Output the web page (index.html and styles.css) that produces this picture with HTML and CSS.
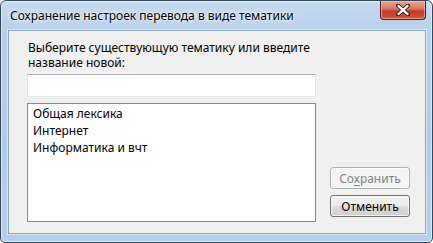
FILE: index.html
```html
<!DOCTYPE html>
<html lang="ru">
<head>
    <meta charset="UTF-8">
    <title>Сохранение настроек перевода в виде тематики</title>
    <link rel="stylesheet" href="styles.css">
</head>
<body>
<div class="window">
    <div class="titlebar">
        <span class="title">Сохранение настроек перевода в виде тематики</span>
        <button class="close" title="Закрыть">
            <svg viewBox="0 0 14 12" width="14" height="12">
                <path d="M2 1.5 L12 10.5 M12 1.5 L2 10.5" stroke="#3b1d1a" stroke-width="4" stroke-linecap="round"/>
                <path d="M2.4 1.9 L11.6 10.1 M11.6 1.9 L2.4 10.1" stroke="#fff" stroke-width="2.2" stroke-linecap="round"/>
            </svg>
        </button>
    </div>

    <div class="client">
        <div class="main">
            <label class="prompt" for="topic-name">Выберите существующую тематику или введите название новой:</label>
            <input class="name-input" id="topic-name" type="text">
            <ul class="topics">
                <li>Общая лексика</li>
                <li>Интернет</li>
                <li>Информатика и вчт</li>
            </ul>
        </div>

        <div class="actions">
            <button class="btn" disabled>Со<u>х</u>ранить</button>
            <button class="btn">Отменить</button>
        </div>
    </div>
</div>
</body>
</html>
```

FILE: styles.css
```css
* {
    box-sizing: border-box;
    margin: 0;
    padding: 0;
}

body {
    font-family: 'Noto Sans', 'Open Sans', sans-serif;
    font-size: 12px;
    line-height: 15px;
    color: #000;
    background: #fff;
}

.window {
    width: 433px;
    height: 243px;
    display: flex;
    flex-direction: column;
    border: 1px solid #34485c;
    border-radius: 6px 6px 5px 5px;
    padding: 0 6px 8px 7px;
    background: linear-gradient(180deg, #c6daef 0%, #b9d0ea 12%, #aecbe9 60%, #b4cfec 100%);
    box-shadow: inset 0 0 0 1px rgba(255, 255, 255, 0.55);
}

/* title bar */
.titlebar {
    height: 29px;
    flex-shrink: 0;
    display: flex;
    align-items: flex-start;
}

.title {
    padding: 7px 0 0 2px;
    text-shadow: 0 0 6px #fff, 0 0 3px #fff;
}

.close {
    margin-left: auto;
    width: 46px;
    height: 19px;
    border: 1px solid #4e1f1a;
    border-top: none;
    border-radius: 0 0 4px 4px;
    background: linear-gradient(180deg, #e8a495 0%, #d67563 45%, #c03a27 55%, #d2583e 100%);
    box-shadow: inset 0 0 0 1px rgba(255, 220, 210, 0.5);
    display: flex;
    align-items: center;
    justify-content: center;
}

/* client area */
.client {
    flex: 1;
    display: flex;
    background: #f0f0f0;
    border: 1px solid #8da4bd;
    box-shadow: 0 0 0 1px rgba(255, 255, 255, 0.5);
    padding: 9px 15px 10px 18px;
}

.main {
    width: 289px;
    display: flex;
    flex-direction: column;
}

.main > * {
    flex-shrink: 0;
}

.prompt {
    display: block;
    padding-left: 1px;
}

.name-input {
    margin-top: 4px;
    height: 23px;
    border: 1px solid #e2e3ea;
    border-top-color: #abadb3;
    border-bottom-color: #e3e9ef;
    background: #fff;
    outline: none;
}

.topics {
    list-style: none;
    margin-top: 6px;
    height: 119px;
    border: 1px solid #828790;
    background: #fff;
    padding: 2px 0 0 5px;
}

.topics li {
    height: 17px;
}

/* buttons */
.actions {
    margin-left: auto;
    margin-bottom: 6px;
    align-self: flex-end;
    display: flex;
    flex-direction: column;
    gap: 6px;
}

.btn {
    width: 80px;
    height: 22px;
    font: inherit;
    color: #000;
    border: 1px solid #707070;
    border-radius: 3px;
    background: linear-gradient(180deg, #f2f2f2 0%, #ebebeb 50%, #dddddd 51%, #cfcfcf 100%);
    box-shadow: inset 0 0 0 1px rgba(255, 255, 255, 0.7);
}

.btn u {
    text-underline-offset: 2px;
}

.btn:disabled {
    color: #838383;
    border-color: #adb2b5;
    background: #f4f4f4;
}
```
